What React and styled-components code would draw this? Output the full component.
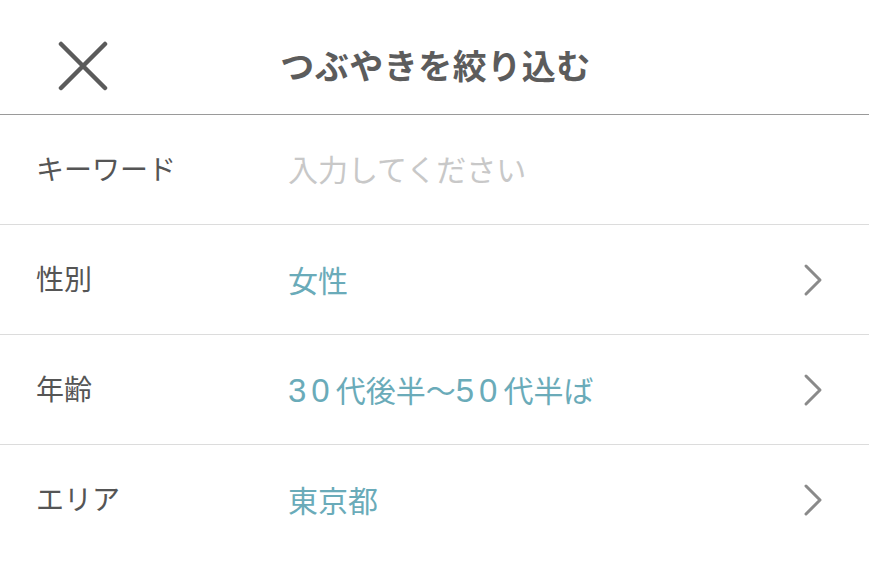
import React from "react";
import styled, { createGlobalStyle } from "styled-components";

const GlobalStyle = createGlobalStyle`
  html, body {
    margin: 0;
    padding: 0;
    background: #fff;
  }
  body {
    font-family: "Noto Sans CJK JP", "Noto Sans", sans-serif;
  }
`;

const rows = [
  { label: "キーワード", placeholder: "入力してください" },
  { label: "性別", value: "女性", arrow: true },
  { label: "年齢", value: "30代後半〜50代半ば", arrow: true },
  { label: "エリア", value: "東京都", arrow: true },
];

// split digits out so they can get their own (wider) font
const renderValue = (text) =>
  text.split(/(\d+)/).map((part, i) =>
    /^\d+$/.test(part) ? <Num key={i}>{part}</Num> : <span key={i}>{part}</span>
  );

const CloseIcon = () => (
  <svg width="50" height="50" viewBox="0 0 50 50">
    <path d="M3 3 L47 47 M47 3 L3 47" stroke="#5b5b5b" strokeWidth="4.5" strokeLinecap="round" />
  </svg>
);

const Chevron = () => (
  <svg width="20" height="34" viewBox="0 0 20 34">
    <path d="M3 3 L17 17 L3 31" stroke="#8a8a8a" strokeWidth="3" fill="none" strokeLinecap="round" strokeLinejoin="round" />
  </svg>
);

const App = () => {
  return (
    <Page>
      <GlobalStyle />
      <Header>
        <CloseButton>
          <CloseIcon />
        </CloseButton>
        <Title>つぶやきを絞り込む</Title>
      </Header>
      {rows.map((r, i) => (
        <Row key={r.label} last={i === rows.length - 1}>
          <Label>{r.label}</Label>
          {r.placeholder ? (
            <Placeholder>{r.placeholder}</Placeholder>
          ) : (
            <Value>{renderValue(r.value)}</Value>
          )}
          {r.arrow && (
            <Arrow>
              <Chevron />
            </Arrow>
          )}
        </Row>
      ))}
    </Page>
  );
};

export default App;

const Page = styled.div`
  width: 869px;
  height: 568px;
  background: #fff;
  overflow: hidden;
`;

const Header = styled.div`
  height: 114px;
  border-bottom: 1px solid #9a9a9a;
  display: flex;
  align-items: center;
  justify-content: center;
  position: relative;
`;

const CloseButton = styled.div`
  position: absolute;
  left: 58px;
  top: 41px;
  width: 50px;
  height: 50px;
`;

const Title = styled.h1`
  margin: 14px 0 0 2px;
  font-size: 34px;
  font-weight: 700;
  color: #5c5c5c;
  letter-spacing: 0.5px;
`;

const Row = styled.div`
  height: 109px;
  display: flex;
  align-items: center;
  padding: 0 46px 0 36px;
  border-bottom: ${(p) => (p.last ? "none" : "1px solid #dcdcdc")};
`;

const Label = styled.div`
  width: 252px;
  font-size: 28px;
  color: #555;
  margin-top: -4px;
`;

const Value = styled.div`
  flex: 1;
  font-size: 30px;
  color: #6aabb9;
  margin-top: -2px;
`;

const Num = styled.span`
  font-family: "Liberation Sans", sans-serif;
  font-size: 33px;
  letter-spacing: 5px;
  margin-right: 1px;
`;

const Placeholder = styled(Value)`
  color: #c8c8c8;
  margin-top: -4px;
`;

const Arrow = styled.div`
  display: flex;
  align-items: center;
`;
